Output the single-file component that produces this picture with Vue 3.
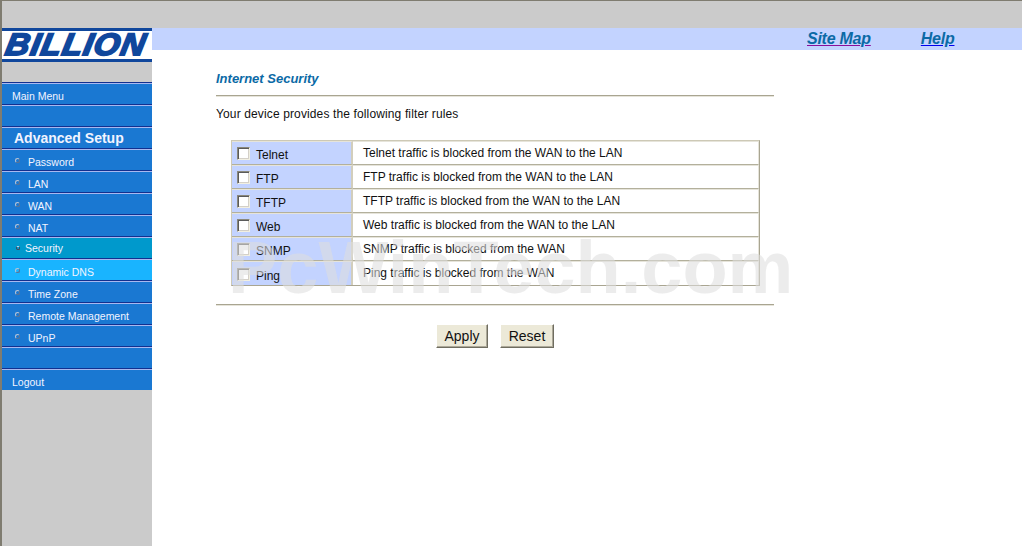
<script setup>
const upper = ['Password', 'LAN', 'WAN', 'NAT']
const lower = ['Time Zone', 'Remote Management', 'UPnP']
const rules = [
  { name: 'Telnet', desc: 'Telnet traffic is blocked from the WAN to the LAN' },
  { name: 'FTP', desc: 'FTP traffic is blocked from the WAN to the LAN' },
  { name: 'TFTP', desc: 'TFTP traffic is blocked from the WAN to the LAN' },
  { name: 'Web', desc: 'Web traffic is blocked from the WAN to the LAN' },
  { name: 'SNMP', desc: 'SNMP traffic is blocked from the WAN' },
  { name: 'Ping', desc: 'Ping traffic is blocked from the WAN' }
]
</script>

<template>
  <div class="page">
    <div class="topbar"></div>
    <div class="body">
      <aside class="side">
        <div class="logo"><span class="logo-text">BILLION</span></div>
        <nav class="menu">
          <div class="row">Main Menu</div>
          <div class="row"></div>
          <div class="row head">Advanced Setup</div>
          <div v-for="m in upper" :key="m" class="row sub"><i class="dot"></i>{{ m }}</div>
          <div class="row sub current"><i class="dot"></i>Security</div>
          <div class="row sub hover"><i class="dot"></i>Dynamic DNS</div>
          <div v-for="m in lower" :key="m" class="row sub"><i class="dot"></i>{{ m }}</div>
          <div class="row"></div>
          <div class="row last">Logout</div>
        </nav>
      </aside>
      <main class="main">
        <div class="links">
          <a class="link visited"><span>Site Map</span></a>
          <a class="link"><span>Help</span></a>
        </div>
        <section class="content">
          <h1 class="title">Internet Security</h1>
          <div class="rule"></div>
          <p class="intro">Your device provides the following filter rules</p>
          <table class="rules">
            <tbody>
              <tr v-for="r in rules" :key="r.name">
                <td class="name"><input type="checkbox" class="check" /><span>{{ r.name }}</span></td>
                <td class="desc">{{ r.desc }}</td>
              </tr>
            </tbody>
          </table>
          <div class="rule second"></div>
          <div class="actions">
            <button class="btn">Apply</button>
            <button class="btn">Reset</button>
          </div>
        </section>
        <div class="mark">PcWinTech.com</div>
      </main>
    </div>
  </div>
</template>

<style>
html, body { margin: 0; background: #fff; overflow: hidden; }
</style>

<style scoped>
.page {
  width: 1022px;
  height: 546px;
  box-sizing: border-box;
  border-top: 1px solid #7f7c70;
  border-left: 2px solid #7f7c70;
  font-family: "Liberation Sans", Arial, sans-serif;
  display: flex;
  flex-direction: column;
  overflow: hidden;
  position: relative;
}
.topbar { height: 27px; background: #cbcbcb; flex: none; }
.body { display: flex; flex: 1; min-height: 0; }
.side { width: 150px; flex: none; background: #cbcbcb; }
.logo {
  height: 34px;
  background: #fff;
  border-top: 3px solid #10479c;
  border-bottom: 3px solid #10479c;
  box-sizing: border-box;
  overflow: hidden;
  display: flex;
  align-items: center;
}
.logo-text {
  font: italic bold 31px/28px "Liberation Sans", Arial, sans-serif;
  color: #10479c;
  -webkit-text-stroke: 1.8px #10479c;
  letter-spacing: 1px;
  transform-origin: left center;
  transform: scaleX(1.07) skewX(-10deg);
  margin-left: 4px;
  white-space: nowrap;
}
.menu { margin-top: 20px; border-top: 1px solid #12308f; }
.row {
  height: 22px;
  box-sizing: border-box;
  background: #1a78d2;
  border-top: 1px solid #a9b8f0;
  border-bottom: 1px solid #12308f;
  color: #f2f4ff;
  font-size: 10.5px;
  line-height: 24px;
  padding-left: 10px;
  white-space: nowrap;
}
.row.head { font-size: 14px; font-weight: bold; padding-left: 12px; line-height: 21px; }
.row.sub { padding-left: 26px; position: relative; }
.row.current { background: #0099cc; padding-left: 23px; line-height: 20px; }
.row.hover { background: #19b4ff; }
.row.last { height: 21px; border-bottom: 0; line-height: 24px; }
.dot {
  position: absolute;
  left: 13px;
  top: 8px;
  width: 3px;
  height: 3px;
  border: 1px solid #b9c4d6;
  border-right-color: #5f7390;
  border-bottom-color: #5f7390;
  border-radius: 50%;
}
.current .dot { left: 14px; top: 8px; width: 2px; height: 2px; border-color: #445; border-top-color: #dde; }
.main { flex: 1; position: relative; min-width: 0; background: #fff; }
.links {
  height: 22px;
  background: #c3d3ff;
  position: relative;
  display: flex;
  align-items: center;
  padding-left: 655px;
}
.link {
  font: italic bold 16px/22px "Liberation Sans", Arial, sans-serif;
  letter-spacing: -0.25px;
  color: #0000ee;
  text-decoration: underline;
  margin-right: 50px;
}
.link.visited { color: #8a0f9a; }
.link span { color: #0b6aa6; }
.content { padding: 21px 0 0 64px; width: 558px; }
.title {
  margin: 0;
  font: italic bold 13px/16px "Liberation Sans", Arial, sans-serif;
  color: #0b6aa6;
}
.rule {
  width: 558px;
  height: 1px;
  margin-top: 8px;
  background: #a9a591;
  border-bottom: 1px solid #e6e4da;
}
.rule.second { margin-top: 18px; }
.intro {
  margin: 9px 0 0;
  font-size: 12px;
  letter-spacing: 0.13px;
  line-height: 16px;
  color: #111;
}
.rules {
  margin: 18px 0 0 15px;
  width: 529px;
  border-collapse: separate;
  border-spacing: 0;
  border: 1px solid #cdc9b6;
  border-right-color: #a9a591;
  border-bottom-color: #a9a591;
  font-size: 12px;
  color: #111;
}
.rules td {
  height: 24px;
  padding: 0;
  box-sizing: border-box;
  border-bottom: 1px solid #b3b09c;
  border-top: 1px solid #e6e4da;
}
.rules tr:last-child td { border-bottom: 0; }
.name {
  width: 121px;
  background: #c3d3ff;
  border-right: 2px solid #d2cebc;
  white-space: nowrap;
}
.name span { position: relative; top: 2px; }
.check {
  appearance: none;
  -webkit-appearance: none;
  width: 13px;
  height: 13px;
  box-sizing: border-box;
  margin: 0 6px 0 5px;
  background: #fff;
  border: 1px solid;
  border-color: #8a887c #f1efe2 #f1efe2 #8a887c;
  box-shadow: inset 1px 1px 0 #5a5a5a, inset -1px -1px 0 #d4d0c8;
  vertical-align: -3px;
}
.desc { padding-left: 10px !important; line-height: 18px; vertical-align: top; padding-top: 2px !important; background: #fff; border-right: 1px solid #e6e4da; }
.actions {
  display: flex;
  gap: 12px;
  margin: 18px 0 0 220px;
}
.btn {
  width: 52px;
  height: 24px;
  padding: 0;
  background: #ece9d8;
  border: 1px solid;
  border-color: #fff #6f6d60 #6f6d60 #fff;
  box-shadow: inset -1px -1px 0 #aca899;
  font: 14px "Liberation Sans", Arial, sans-serif;
  color: #111;
}
.btn:last-child { width: 54px; }
.mark {
  position: absolute;
  left: 76px;
  top: 200px;
  font: bold 74px/80px "Liberation Sans", Arial, sans-serif;
  color: rgba(222, 222, 222, 0.57);
  white-space: nowrap;
  pointer-events: none;
}
</style>
